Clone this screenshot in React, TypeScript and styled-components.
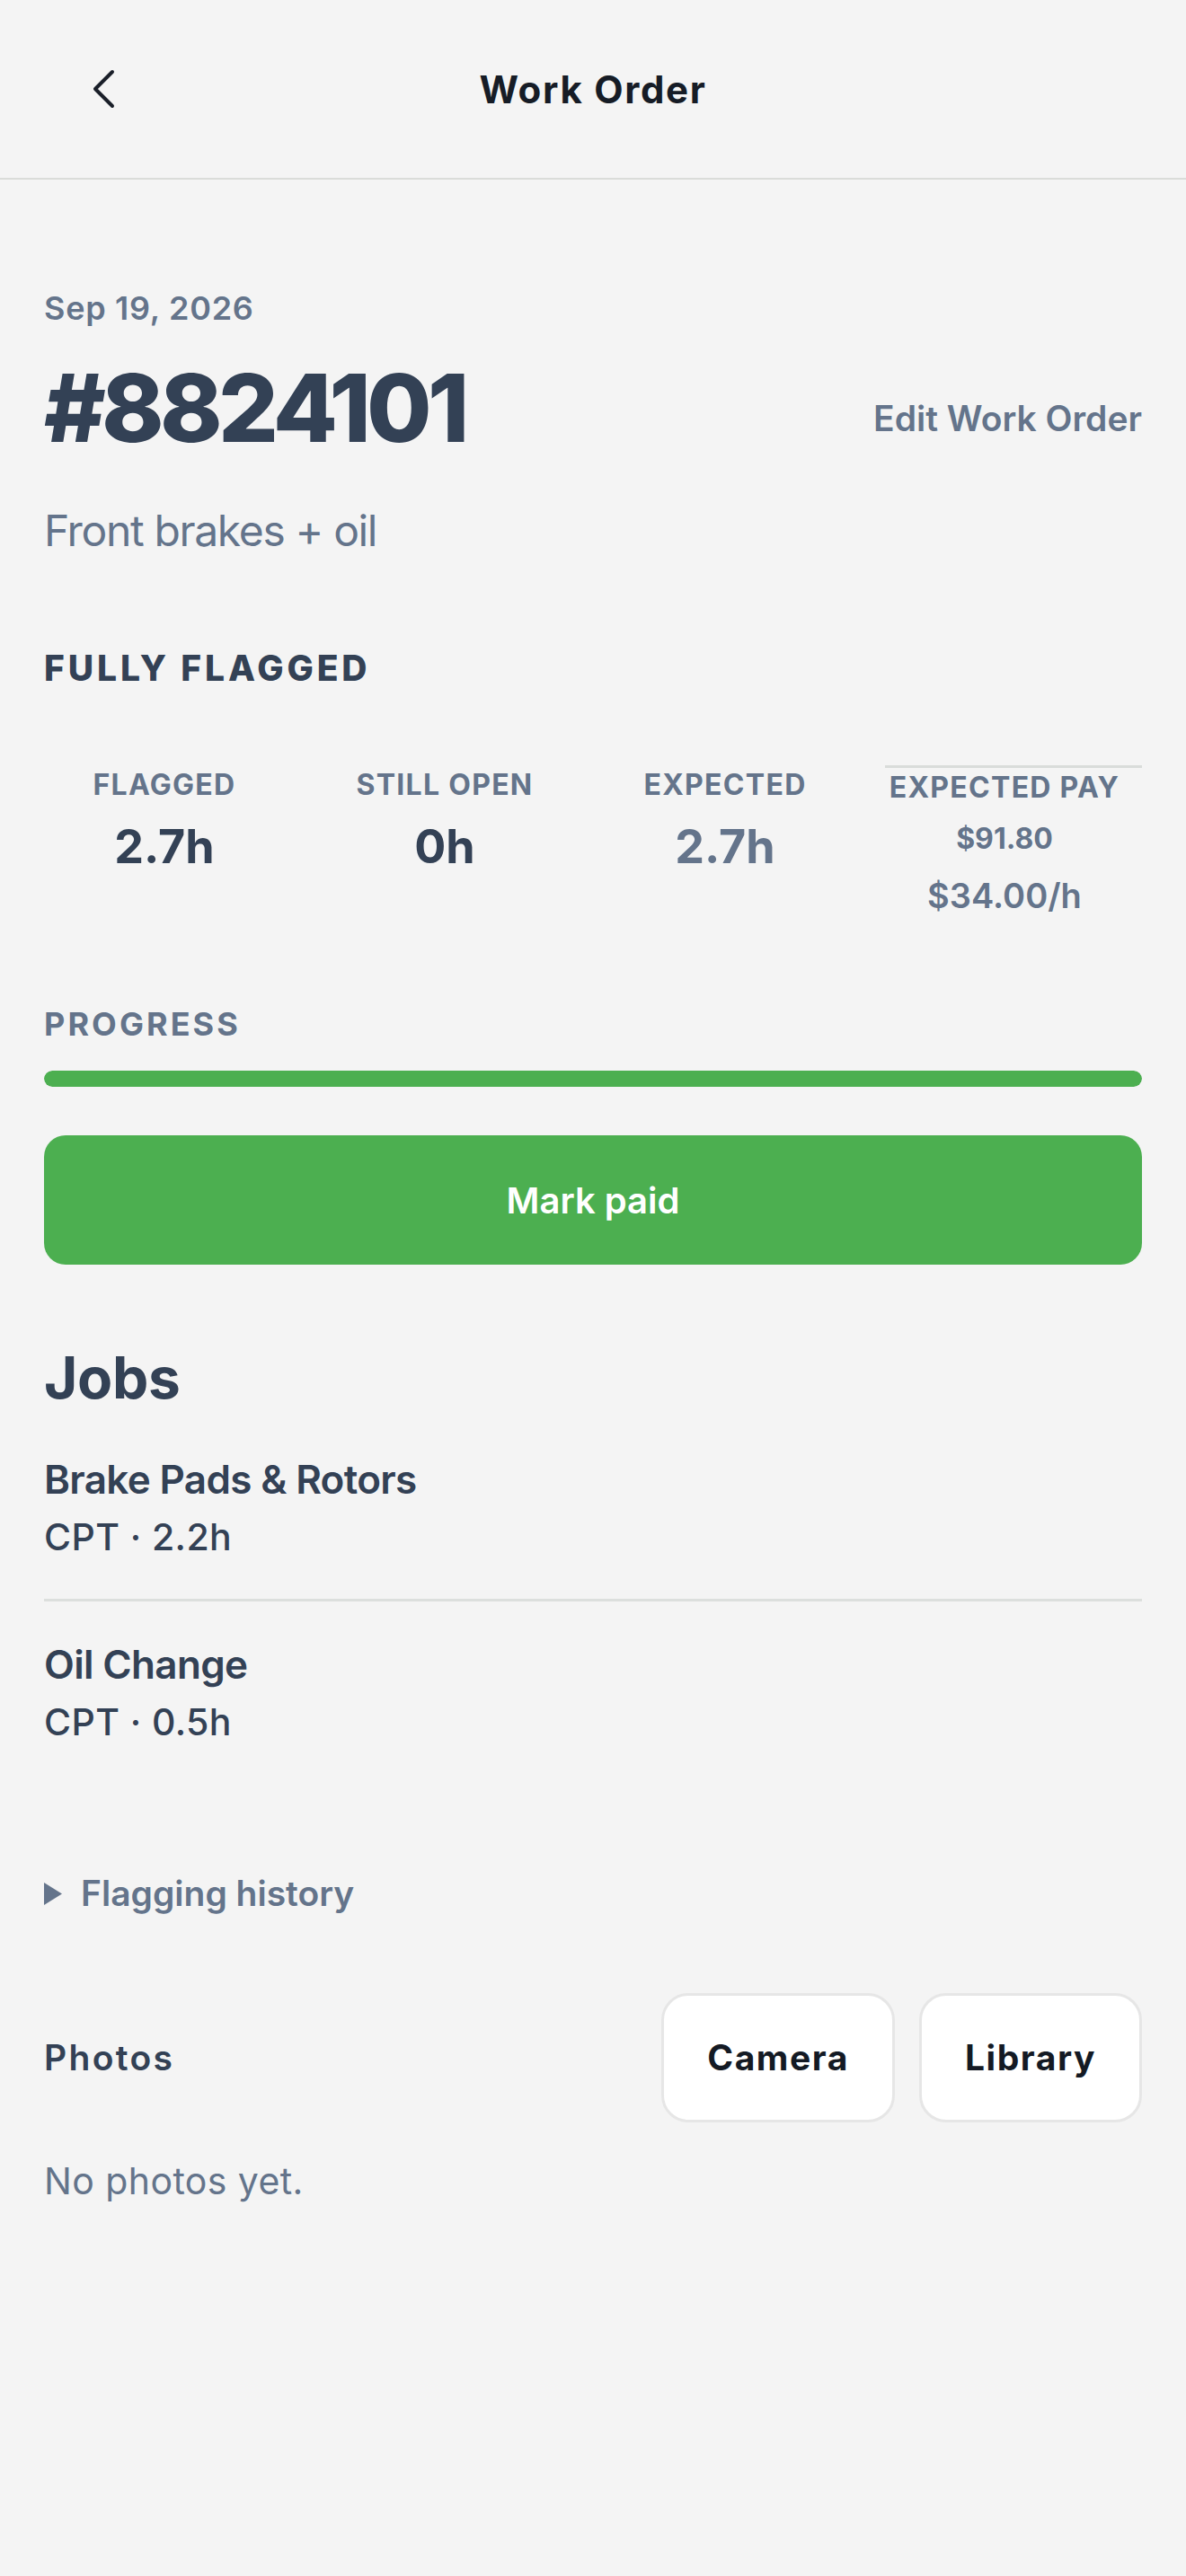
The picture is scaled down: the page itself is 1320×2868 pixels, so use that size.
import React from 'react';
import styled, { createGlobalStyle } from 'styled-components';

const GlobalStyle = createGlobalStyle`
  html, body {
    margin: 0;
    padding: 0;
    background: #f4f4f4;
  }
  body {
    font-family: Inter, "Noto Sans", sans-serif;
    -webkit-font-smoothing: antialiased;
  }
  * {
    box-sizing: border-box;
  }
`;

const Screen = styled.div`
  width: 1320px;
  min-height: 2868px;
  background: #f4f4f4;
`;

const Header = styled.header`
  height: 200px;
  display: grid;
  grid-template-columns: 1fr auto 1fr;
  align-items: center;
  border-bottom: 2px solid #dadcd9;
`;

const BackButton = styled.button`
  justify-self: start;
  margin-left: 94px;
  width: 44px;
  height: 56px;
  padding: 0;
  border: none;
  background: transparent;
  display: flex;
  align-items: center;
  justify-content: center;
  color: #1a1f29;
`;

const HeaderTitle = styled.h1`
  margin: 0;
  font-size: 42px;
  font-weight: 700;
  color: #161c26;
  letter-spacing: 0.04em;
`;

const Content = styled.main`
  padding: 122px 49px 0;
`;

const DateLine = styled.div`
  font-size: 36px;
  font-weight: 600;
  line-height: 1.2;
  color: #64748b;
  letter-spacing: 0.02em;
`;

const TitleRow = styled.div`
  margin-top: 26px;
  display: flex;
  align-items: center;
  justify-content: space-between;
`;

const OrderNumber = styled.div`
  font-size: 105px;
  font-weight: 800;
  line-height: 1.2;
  color: #334155;
  letter-spacing: -0.045em;
`;

const EditLink = styled.button`
  margin-top: 22px;
  padding: 0;
  border: none;
  background: transparent;
  font-family: inherit;
  font-size: 39px;
  font-weight: 600;
  color: #64748b;
`;

const Description = styled.div`
  margin-top: 45px;
  font-size: 48px;
  line-height: 1.2;
  color: #64748b;
  letter-spacing: -0.028em;
`;

const SectionTitle = styled.div`
  margin-top: 101px;
  font-size: 39px;
  font-weight: 800;
  line-height: 1.2;
  color: #334155;
  letter-spacing: 0.1em;
`;

const StatsGrid = styled.div`
  margin-top: 84px;
  display: grid;
  grid-template-columns: 268px 268px 268px 286px;
  column-gap: 44px;
`;

const StatCell = styled.div<{ $ruled?: boolean }>`
  border-top: 3px solid ${(p) => (p.$ruled ? '#d9dcda' : 'transparent')};
  padding-top: ${(p) => (p.$ruled ? '3px' : '0')};
  padding-right: ${(p) => (p.$ruled ? '20px' : '0')};
  text-align: center;
`;

const StatLabel = styled.div`
  font-size: 32px;
  font-weight: 700;
  line-height: 1.2;
  color: #64748b;
  letter-spacing: 0.04em;
`;

const StatValue = styled.div<{ $muted?: boolean }>`
  margin-top: 19px;
  font-size: 52px;
  font-weight: 700;
  line-height: 1.2;
  color: ${(p) => (p.$muted ? '#64748b' : '#334155')};
`;

const PayAmount = styled.div`
  margin-top: 19px;
  font-size: 32px;
  font-weight: 700;
  line-height: 1.2;
  color: #64748b;
`;

const PayRate = styled.div`
  margin-top: 22px;
  font-size: 38px;
  font-weight: 600;
  line-height: 1.2;
  color: #64748b;
`;

const ProgressLabel = styled.div`
  margin-top: 98px;
  font-size: 36px;
  font-weight: 700;
  line-height: 1.2;
  color: #64748b;
  letter-spacing: 0.085em;
`;

const ProgressTrack = styled.div`
  margin-top: 30px;
  height: 18px;
  border-radius: 9px;
  background: #e2e5e3;
  overflow: hidden;
`;

const ProgressFill = styled.div`
  height: 100%;
  border-radius: 9px;
  background: #4caf50;
`;

const PrimaryButton = styled.button`
  margin-top: 54px;
  width: 100%;
  height: 144px;
  border: none;
  border-radius: 24px;
  background: #4caf50;
  color: #ffffff;
  font-family: inherit;
  font-size: 40px;
  font-weight: 600;
`;

const JobsTitle = styled.h2`
  margin: 88px 0 0;
  font-size: 64px;
  font-weight: 700;
  line-height: 1.2;
  color: #334155;
  letter-spacing: -0.005em;
`;

const JobList = styled.div`
  margin-top: 4px;
`;

const JobRow = styled.div`
  padding: 44px 0;
  border-bottom: 3px solid #dcdfdd;

  &:last-child {
    border-bottom: none;
  }
`;

const JobName = styled.div`
  font-size: 44px;
  font-weight: 600;
  line-height: 1.2;
  color: #334155;
  letter-spacing: -0.015em;
`;

const JobMeta = styled.div`
  margin-top: 13px;
  font-size: 41px;
  font-weight: 500;
  line-height: 1.2;
  color: #334155;
  letter-spacing: 0.01em;
`;

const HistoryToggle = styled.div`
  margin-top: 99px;
  display: flex;
  align-items: center;
  gap: 21px;
  font-size: 39px;
  font-weight: 600;
  line-height: 1.2;
  color: #64748b;
`;

const PhotosRow = styled.div`
  margin-top: 87px;
  display: flex;
  align-items: center;
  justify-content: space-between;
`;

const PhotosTitle = styled.div`
  font-size: 39px;
  font-weight: 600;
  color: #334155;
  letter-spacing: 0.06em;
`;

const PhotoActions = styled.div`
  display: flex;
  gap: 27px;
`;

const PhotoButton = styled.button`
  height: 144px;
  padding: 0 48px;
  border: 3px solid #e6e6e6;
  border-radius: 30px;
  background: #ffffff;
  font-family: inherit;
  font-size: 39px;
  font-weight: 700;
  color: #141a24;
  letter-spacing: 0.04em;
`;

const EmptyNote = styled.div`
  margin-top: 41px;
  font-size: 41px;
  line-height: 1.2;
  color: #64748b;
  letter-spacing: 0.01em;
`;

const jobs = [
  { name: 'Brake Pads & Rotors', meta: 'CPT · 2.2h' },
  { name: 'Oil Change', meta: 'CPT · 0.5h' },
];

const App = () => {
  return (
    <Screen>
      <GlobalStyle />
      <Header>
        <BackButton aria-label='Back'>
          <svg width='26' height='44' viewBox='0 0 26 44' fill='none'>
            <polyline
              points='22,3 3,22 22,41'
              stroke='currentColor'
              strokeWidth='4'
              strokeLinecap='round'
              strokeLinejoin='round'
            />
          </svg>
        </BackButton>
        <HeaderTitle>Work Order</HeaderTitle>
        <div />
      </Header>

      <Content>
        <DateLine>Sep 19, 2026</DateLine>
        <TitleRow>
          <OrderNumber>#8824101</OrderNumber>
          <EditLink>Edit Work Order</EditLink>
        </TitleRow>
        <Description>Front brakes + oil</Description>

        <SectionTitle>FULLY FLAGGED</SectionTitle>
        <StatsGrid>
          <StatCell>
            <StatLabel>FLAGGED</StatLabel>
            <StatValue>2.7h</StatValue>
          </StatCell>
          <StatCell>
            <StatLabel>STILL OPEN</StatLabel>
            <StatValue>0h</StatValue>
          </StatCell>
          <StatCell>
            <StatLabel>EXPECTED</StatLabel>
            <StatValue $muted>2.7h</StatValue>
          </StatCell>
          <StatCell $ruled>
            <StatLabel>EXPECTED PAY</StatLabel>
            <PayAmount>$91.80</PayAmount>
            <PayRate>$34.00/h</PayRate>
          </StatCell>
        </StatsGrid>

        <ProgressLabel>PROGRESS</ProgressLabel>
        <ProgressTrack>
          <ProgressFill style={{ width: '100%' }} />
        </ProgressTrack>
        <PrimaryButton>Mark paid</PrimaryButton>

        <JobsTitle>Jobs</JobsTitle>
        <JobList>
          {jobs.map((job) => (
            <JobRow key={job.name}>
              <JobName>{job.name}</JobName>
              <JobMeta>{job.meta}</JobMeta>
            </JobRow>
          ))}
        </JobList>

        <HistoryToggle>
          <svg width='20' height='25' viewBox='0 0 20 25'>
            <polygon points='0,0 20,12.5 0,25' fill='#64748b' />
          </svg>
          Flagging history
        </HistoryToggle>

        <PhotosRow>
          <PhotosTitle>Photos</PhotosTitle>
          <PhotoActions>
            <PhotoButton>Camera</PhotoButton>
            <PhotoButton>Library</PhotoButton>
          </PhotoActions>
        </PhotosRow>
        <EmptyNote>No photos yet.</EmptyNote>
      </Content>
    </Screen>
  );
};

export default App;
